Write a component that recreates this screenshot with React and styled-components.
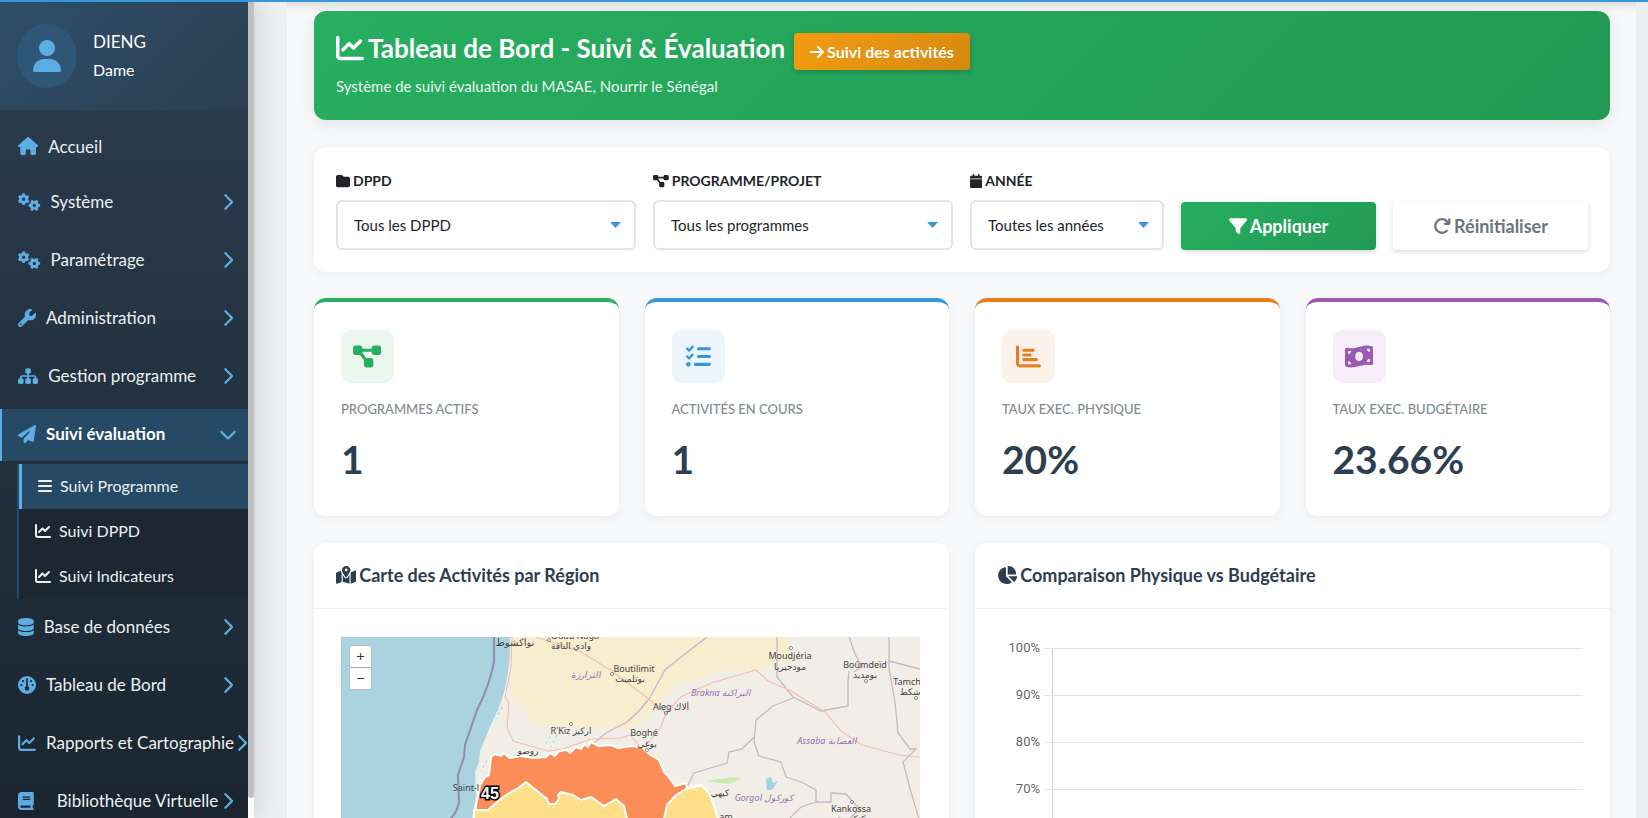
import styled, { createGlobalStyle } from "styled-components";
import {
    FaUser,
    FaHouse,
    FaGears,
    FaWrench,
    FaSitemap,
    FaPaperPlane,
    FaBars,
    FaChartLine,
    FaDatabase,
    FaGauge,
    FaBook,
    FaChevronRight,
    FaChevronDown,
    FaArrowRight,
    FaFolder,
    FaDiagramProject,
    FaCalendar,
    FaFilter,
    FaArrowRotateRight,
    FaListCheck,
    FaChartBar,
    FaMoneyBillWave,
    FaMapLocationDot,
    FaChartPie,
} from "react-icons/fa6";

const GlobalStyle = createGlobalStyle`
    * {
        box-sizing: border-box;
    }

    body {
        margin: 0;
        font-family: Lato, "Noto Sans", sans-serif;
        color: #212529;
        background: #ecf0f1;
    }

    #root {
        height: 100vh;
    }

    /* react-icons squeezes every icon in a square, give them back their width */
    svg {
        flex: none;
    }

    svg[viewBox="0 0 640 512"] {
        width: 1.25em;
    }

    svg[viewBox="0 0 576 512"] {
        width: 1.125em;
    }

    svg[viewBox="0 0 448 512"] {
        width: 0.875em;
    }

    svg[viewBox="0 0 320 512"] {
        width: 0.625em;
    }
`;

const Page = styled.div`
    display: flex;
    height: 100%;
    overflow: hidden;
    border-top: 2px solid #3498db;
`;

const Sidebar = styled.aside`
    flex: 0 0 254px;
    min-width: 0;
    display: flex;
    color: #ecf0f1;
    background: #fff;
    box-shadow: 4px 0 20px rgba(0, 0, 0, 0.12);
    z-index: 1;
`;

const SidebarBody = styled.div`
    flex: 1;
    min-width: 0;
    overflow: hidden;
    background: linear-gradient(180deg, #2c3e50 0%, #1a252f 100%);
`;

const Scrollbar = styled.div`
    width: 6px;
    height: calc(100% - 20px);
    border-radius: 0 0 3px 3px;
    background: #c1c1c1;
`;

const UserPanel = styled.div`
    display: flex;
    align-items: center;
    gap: 16px;
    height: 108px;
    padding: 0 17px;
    background: linear-gradient(135deg, #2d4f6b 0%, #2c3e50 100%);
`;

const Avatar = styled.div`
    display: flex;
    align-items: center;
    justify-content: center;
    width: 60px;
    height: 64px;
    border-radius: 50%;
    background: #2e5777;
    color: #5dade2;
    font-size: 32px;
`;

const UserName = styled.div`
    display: flex;
    flex-direction: column;
    gap: 4px;
    color: #fff;
    font-size: 17px;
    line-height: 24px;
`;

const FirstName = styled.span`
    font-size: 16px;
`;

const Menu = styled.ul`
    list-style: none;
    margin: 0;
    padding: 8px 0 0;
`;

const MenuEntry = styled.li`
    padding: 3px 0;
`;

const MenuLink = styled.a`
    display: flex;
    align-items: center;
    height: ${(p) => (p.$plain ? "50px" : "52px")};
    padding: ${(p) => (p.$plain ? "0 13px 0 16px" : "0 13px 3px 16px")};
    border-left: 2px solid ${(p) => (p.$active ? "#5dade2" : "transparent")};
    background: ${(p) => (p.$active ? "#264a66" : "transparent")};
    color: ${(p) => (p.$active ? "#fff" : "#ecf0f1")};
    font-size: 17px;
    font-weight: ${(p) => (p.$active ? 700 : 400)};
    white-space: nowrap;
    text-decoration: none;
`;

const MenuIcon = styled.span`
    display: flex;
    margin-right: ${(p) => (p.$wide ? "23px" : "10px")};
    color: #5dade2;
    font-size: 18px;
`;

const Chevron = styled.span`
    flex: none;
    display: flex;
    justify-content: center;
    width: 15px;
    margin-left: auto;
    color: #5dade2;
    font-size: 18px;
`;

const SubMenu = styled.ul`
    list-style: none;
    margin: 0 0 0 17px;
    padding: 0;
    border-left: 2px solid #264a66;
    background: #1c2731;
`;

const SubLink = styled.a`
    display: flex;
    align-items: center;
    gap: 8px;
    height: 45px;
    padding: 0 0 2px 16px;
    border-left: ${(p) => (p.$active ? "3px solid #5dade2" : "none")};
    background: ${(p) => (p.$active ? "#264a66" : "transparent")};
    color: #ecf0f1;
    font-size: 16px;
    text-decoration: none;
`;

const Main = styled.main`
    flex: 1;
    min-width: 0;
    margin: 0 12px 0 33px;
    padding: 9px 26px 0 27px;
    background: #f8f9fa;
    box-shadow: inset 0 12px 10px -8px rgba(0, 0, 0, 0.12);
`;

const Banner = styled.header`
    height: 109px;
    padding: 22px;
    border-radius: 12px;
    background: linear-gradient(135deg, #27ae60 0%, #229954 100%);
    box-shadow: 0 4px 15px rgba(0, 0, 0, 0.1);
    color: #fff;
`;

const BannerTitle = styled.div`
    display: flex;
    align-items: flex-start;
    gap: 9px;
`;

const Heading = styled.h1`
    display: flex;
    align-items: center;
    gap: 4px;
    margin: 0;
    font-size: 26px;
    font-weight: 700;
    line-height: 30px;
    white-space: nowrap;

    svg {
        font-size: 28px;
    }
`;

const ActivityLink = styled.a`
    display: flex;
    align-items: center;
    gap: 3px;
    height: 37px;
    padding: 0 16px;
    border-radius: 4px;
    background: linear-gradient(135deg, #f39c12, #d68910);
    box-shadow: 0 2px 5px rgba(0, 0, 0, 0.2);
    color: #fff;
    font-size: 16px;
    font-weight: 700;
    text-decoration: none;
    white-space: nowrap;
`;

const BannerText = styled.p`
    margin: 4px 0 0;
    font-size: 15px;
    line-height: 24px;
    opacity: 0.9;
`;

const Card = styled.section`
    border-radius: 12px;
    background: #fff;
    box-shadow: 0 2px 10px rgba(0, 0, 0, 0.06);
`;

const Filters = styled(Card)`
    display: grid;
    grid-template-columns: 300fr 300fr 194fr 195fr 195fr;
    gap: 17px;
    align-items: end;
    margin-top: 27px;
    padding: 22px;
    height: 125px;
`;

const Field = styled.div`
    display: flex;
    flex-direction: column;
    gap: 7px;
    min-width: 0;
`;

const Label = styled.label`
    display: flex;
    align-items: center;
    gap: 3px;
    font-size: 14px;
    font-weight: 700;
    line-height: 24px;
    text-transform: uppercase;
`;

const Select = styled.select`
    appearance: none;
    width: 100%;
    height: 50px;
    padding: 0 16px;
    border: 2px solid #dfe4e6;
    border-radius: 6px;
    background: #fff
        url("data:image/svg+xml,%3Csvg xmlns='http://www.w3.org/2000/svg' width='11' height='6'%3E%3Cpath d='M0 0h11L5.500 6z' fill='%233498db'/%3E%3C/svg%3E")
        no-repeat right 13px center;
    color: #212529;
    font-family: inherit;
    font-size: 15px;
`;

const Button = styled.button`
    display: flex;
    align-items: center;
    justify-content: center;
    gap: 3px;
    height: 48px;
    border: none;
    border-radius: 4px;
    background: ${(p) => (p.$primary ? "linear-gradient(135deg, #27ae60, #229954)" : "#fff")};
    box-shadow: 0 2px 5px rgba(0, 0, 0, 0.15);
    color: ${(p) => (p.$primary ? "#fff" : "#6c757d")};
    font-family: inherit;
    font-size: 18px;
    font-weight: 700;
`;

const Stats = styled.div`
    display: grid;
    grid-template-columns: repeat(4, 1fr);
    gap: 26px;
    margin-top: 26px;
`;

const StatCard = styled(Card)`
    height: 218px;
    padding: 28px 27px;
    border-top: 4px solid ${(p) => p.$color};
`;

const StatIcon = styled.div`
    display: flex;
    align-items: center;
    justify-content: center;
    width: 53px;
    height: 53px;
    border-radius: 10px;
    background: ${(p) => p.$tint};
    color: ${(p) => p.$color};
    font-size: 25px;
`;

const StatLabel = styled.div`
    margin-top: 16px;
    color: #7f8c8d;
    font-size: 13px;
    font-weight: 500;
    line-height: 20px;
    text-transform: uppercase;
`;

const StatValue = styled.div`
    margin-top: 16px;
    color: #2c3e50;
    font-size: 39px;
    font-weight: 700;
    line-height: 48px;
`;

const Panels = styled.div`
    display: grid;
    grid-template-columns: 1fr 1fr;
    gap: 26px;
    margin-top: 27px;
`;

const PanelHeader = styled.div`
    height: 66px;
    padding: 0 22px;
    border-bottom: 1px solid #ecf0f1;
`;

const PanelTitle = styled.h2`
    display: flex;
    align-items: center;
    gap: 3px;
    margin: 0;
    color: #2c3e50;
    font-size: 18px;
    font-weight: 700;
    line-height: 64px;
`;

const MapFrame = styled.div`
    position: relative;
    height: 420px;
    margin: 28px 29px 28px 27px;
    overflow: hidden;
    background: #f1eee8;
`;

const MapDrawing = styled.svg`
    display: block;
    width: 100%;
    height: 100%;
`;

const ZoomControl = styled.div`
    position: absolute;
    top: 8px;
    left: 8px;
    display: flex;
    flex-direction: column;
    border: 1px solid #b5bfc2;
    border-radius: 3px;
    overflow: hidden;
`;

const ZoomButton = styled.button`
    width: 21px;
    height: 21px;
    padding: 0;
    border: none;
    background: #fff;
    color: #333;
    font-family: "Open Sans", sans-serif;
    font-size: 15px;
    line-height: 21px;

    & + & {
        height: 22px;
        border-top: 1px solid #aaa;
    }
`;

const ChartBody = styled.div`
    padding: 28px 27px;
`;

const ChartRow = styled.div`
    display: grid;
    grid-template-columns: 38px 1fr;
    gap: 4px;
    height: 47px;
    color: #666;
    font-family: Roboto, sans-serif;
    font-size: 13px;
`;

const Tick = styled.span`
    text-align: right;
    line-height: 21px;
`;

const GridLine = styled.div`
    display: flex;
    margin-top: 11px;
    padding-left: 8px;
    border-top: 1px solid #e3e3e3;

    &::before {
        content: "";
        border-left: 1px solid #d0d0d0;
        margin-bottom: -11px;
    }
`;

const menuTop = [
    { label: "Accueil", icon: FaHouse, plain: true },
    { label: "Système", icon: FaGears },
    { label: "Paramétrage", icon: FaGears },
    { label: "Administration", icon: FaWrench },
    { label: "Gestion programme", icon: FaSitemap },
    { label: "Suivi évaluation", icon: FaPaperPlane, active: true },
];

const subMenu = [
    { label: "Suivi Programme", icon: FaBars, active: true },
    { label: "Suivi DPPD", icon: FaChartLine },
    { label: "Suivi Indicateurs", icon: FaChartLine },
];

const menuBottom = [
    { label: "Base de données", icon: FaDatabase },
    { label: "Tableau de Bord", icon: FaGauge },
    { label: "Rapports et Cartographie", icon: FaChartLine },
    { label: "Bibliothèque Virtuelle", icon: FaBook, wide: true },
];

const stats = [
    { label: "Programmes actifs", value: "1", icon: FaDiagramProject, color: "#27ae60", tint: "#e9f7ef" },
    { label: "Activités en cours", value: "1", icon: FaListCheck, color: "#3498db", tint: "#ebf5fb" },
    { label: "Taux exec. physique", value: "20%", icon: FaChartBar, color: "#e67e22", tint: "#fdf2e9" },
    { label: "Taux exec. budgétaire", value: "23.66%", icon: FaMoneyBillWave, color: "#9b59b6", tint: "#f5eef8" },
];

const ticks = ["100%", "90%", "80%", "70%", "60%", "50%"];

const places = [
    { x: 174, y: 9, text: "نواكشوط", size: 10 },
    { x: 234, y: 2, text: "Ouad Naga", size: 9 },
    { x: 230, y: 12, text: "وادي الناقة", size: 9 },
    { x: 293, y: 35, text: "Boutilimit", size: 9 },
    { x: 289, y: 45, text: "بوتلميت", size: 9 },
    { x: 230, y: 97, text: "R'Kiz اركيز", size: 9 },
    { x: 187, y: 117, text: "روصو", size: 9 },
    { x: 125, y: 154, text: "Saint-l", size: 9 },
    { x: 330, y: 73, text: "Aleg ألاك", size: 9 },
    { x: 303, y: 99, text: "Boghé", size: 9 },
    { x: 306, y: 110, text: "بوغي", size: 9 },
    { x: 449, y: 22, text: "Moudjéria", size: 9 },
    { x: 449, y: 33, text: "مودجيريا", size: 9 },
    { x: 524, y: 31, text: "Boûmdeïd", size: 9 },
    { x: 524, y: 41, text: "بومديد", size: 9 },
    { x: 566, y: 48, text: "Tamch", size: 9 },
    { x: 569, y: 58, text: "شكط", size: 9 },
    { x: 379, y: 159, text: "كيهي", size: 9 },
    { x: 385, y: 183, text: "am", size: 9 },
    { x: 510, y: 175, text: "Kankossa", size: 9 },
    { x: 510, y: 185, text: "كنكوصة", size: 9 },
];

const regions = [
    { x: 245, y: 41, text: "الترارزة" },
    { x: 380, y: 59, text: "Brakna البراكنة" },
    { x: 486, y: 107, text: "Assaba العصابة" },
    { x: 423, y: 164, text: "Gorgol كوركول" },
];

const towns = [
    [208, 3],
    [271, 37],
    [230, 87],
    [325, 76],
    [306, 113],
    [450, 11],
    [525, 44],
    [575, 61],
    [511, 165],
];

const MenuItem = ({ item }) => {
    const Icon = item.icon;
    return (
        <MenuEntry>
            <MenuLink href="#" $active={item.active} $plain={item.plain}>
                <MenuIcon $wide={item.wide}>
                    <Icon />
                </MenuIcon>
                {item.label}
                {!item.plain && <Chevron>{item.active ? <FaChevronDown /> : <FaChevronRight />}</Chevron>}
            </MenuLink>
        </MenuEntry>
    );
};

const RegionMap = () => (
    <MapFrame>
        <MapDrawing viewBox="0 0 579 420" preserveAspectRatio="xMinYMin slice" role="img" aria-label="Carte des régions">
            <rect width="579" height="420" fill="#f1eee8" />
            <path d="M170 0H449V23L416 35L390 33L335 48L316 70L304 84L290 92L240 90L194 88L184 72L172 62L168 40Z" fill="#f7edcf" />
            <path d="M0 0H169Q170 35 160 65L149 90L139 114L138 125L134 136L135 160L131 182L115 420H0Z" fill="#aad3df" />
            <path d="M153 0V25Q148 50 136 73L124 108L123 120L117 138L118 165Q116 176 109 182L85 420" fill="none" stroke="#8e8eb5" strokeWidth="2" />
            <g fill="none" stroke="#c8b7c4" strokeWidth="1.3">
                <path d="M366 0L335 24L324 33L308 62L298 74L286 85L265 96L252 107" />
                <path d="M436 0V40L452 60L480 74L507 69V45L508 34" />
                <path d="M452 61L432 69L415 83L413 105L418 119L440 125L445 140L460 145L475 153L475 165H490V156L505 157L513 166L519 172L509 181" />
                <path d="M413 100L401 112L388 115L386 126L353 136L346 150" />
                <path d="M508 0L514 17L521 29L513 35" />
                <path d="M548 0V32L554 65L557 96L569 112H575L562 125L570 155L578 182" />
                <path d="M548 24L579 32" />
                <path d="M475 165L460 170L445 185" />
            </g>
            <g fill="none" stroke="#f2bdb1" strokeWidth="1.1">
                <path d="M171 0L170 30L164 60L168 66L166 90L172 104L207 114L222 112L250 102L280 101L289 98L304 115" />
                <path d="M195 0L240 15L271 34L300 56L325 76L320 90L306 107" />
                <path d="M325 76L340 60L370 46L415 33L427 44L450 54L466 64L484 75L500 94L521 108L558 118L579 120" />
            </g>
            <g fill="none" stroke="#9fd3e2" strokeWidth="1" strokeDasharray="3 3">
                <path d="M157 72L151 84M161 70L155 82M209 99L203 110M216 98L210 110M146 123L140 134" />
            </g>
            <path d="M365 144L393 140L401 142L387 147Z" fill="#c9ecae" />
            <path d="M425 142L430 140L432 146L437 144L431 153L426 153Z" fill="#9fd3e2" />
            <path
                d="M132 420L134 174L139 148L144 140L148 138L150 120L154 117L160 119L163 116L169 121L180 119L192 121L205 120L209 116L214 119L218 114L226 113L229 116L235 110L240 112L243 107L247 110L250 105L258 109L270 108L277 111L290 109L301 110L308 117L318 123L323 135L327 139L334 149L345 146L346 151L335 162L377 182L400 420Z"
                fill="#fc8d59"
                stroke="#fff"
                strokeWidth="2"
                strokeLinejoin="round"
            />
            <path
                d="M130 420L133 173H147L162 160L170 155L176 152L185 145L206 162L208 167H214L218 162L217 158L220 155L232 158L240 163L250 160L263 169L275 162L283 169L286 182L290 420Z"
                fill="#fee08b"
                stroke="#fff"
                strokeWidth="2"
                strokeLinejoin="round"
            />
            <path
                d="M326 420L323 182L326 168L335 158L345 152L354 150L360 148L366 154L370 160L377 182L400 420Z"
                fill="#fee08b"
                stroke="#fff"
                strokeWidth="2"
                strokeLinejoin="round"
            />
            <g fill="none" stroke="#777" strokeWidth="0.8">
                {towns.map(([x, y]) => (
                    <circle key={`${x}-${y}`} cx={x} cy={y} r="1.6" />
                ))}
            </g>
            <g fontFamily="Noto Sans, DejaVu Sans, sans-serif" fill="#444" textAnchor="middle">
                {places.map((p) => (
                    <text key={p.text} x={p.x} y={p.y} fontSize={p.size}>
                        {p.text}
                    </text>
                ))}
            </g>
            <g fontFamily="Noto Sans, DejaVu Sans, sans-serif" fontSize="9" fontStyle="italic" fill="#9a6fb0" textAnchor="middle">
                {regions.map((r) => (
                    <text key={r.text} x={r.x} y={r.y}>
                        {r.text}
                    </text>
                ))}
            </g>
            <text x="149" y="162" textAnchor="middle" fontFamily="Liberation Sans, sans-serif" fontSize="16" fontWeight="700" fill="#fff" stroke="#000" strokeWidth="3" paintOrder="stroke">
                45
            </text>
        </MapDrawing>
        <ZoomControl>
            <ZoomButton aria-label="Zoom avant">+</ZoomButton>
            <ZoomButton aria-label="Zoom arrière">−</ZoomButton>
        </ZoomControl>
    </MapFrame>
);

const App = () => {
    return (
        <>
            <GlobalStyle />
            <Page>
                <Sidebar>
                    <SidebarBody>
                        <UserPanel>
                            <Avatar>
                                <FaUser />
                            </Avatar>
                            <UserName>
                                DIENG
                                <FirstName>Dame</FirstName>
                            </UserName>
                        </UserPanel>
                        <Menu>
                            {menuTop.map((item) => (
                                <MenuItem key={item.label} item={item} />
                            ))}
                            <li>
                                <SubMenu>
                                    {subMenu.map(({ label, icon: Icon, active }) => (
                                        <li key={label}>
                                            <SubLink href="#" $active={active}>
                                                <Icon />
                                                {label}
                                            </SubLink>
                                        </li>
                                    ))}
                                </SubMenu>
                            </li>
                            {menuBottom.map((item) => (
                                <MenuItem key={item.label} item={item} />
                            ))}
                        </Menu>
                    </SidebarBody>
                    <Scrollbar />
                </Sidebar>

                <Main>
                    <Banner>
                        <BannerTitle>
                            <Heading>
                                <FaChartLine />
                                Tableau de Bord - Suivi &amp; Évaluation
                            </Heading>
                            <ActivityLink href="#">
                                <FaArrowRight />
                                Suivi des activités
                            </ActivityLink>
                        </BannerTitle>
                        <BannerText>Système de suivi évaluation du MASAE, Nourrir le Sénégal</BannerText>
                    </Banner>

                    <Filters as="form">
                        <Field>
                            <Label htmlFor="dppd">
                                <FaFolder /> DPPD
                            </Label>
                            <Select id="dppd">
                                <option>Tous les DPPD</option>
                            </Select>
                        </Field>
                        <Field>
                            <Label htmlFor="programme">
                                <FaDiagramProject /> Programme/Projet
                            </Label>
                            <Select id="programme">
                                <option>Tous les programmes</option>
                            </Select>
                        </Field>
                        <Field>
                            <Label htmlFor="annee">
                                <FaCalendar /> Année
                            </Label>
                            <Select id="annee">
                                <option>Toutes les années</option>
                            </Select>
                        </Field>
                        <Button type="button" $primary>
                            <FaFilter /> Appliquer
                        </Button>
                        <Button type="reset">
                            <FaArrowRotateRight /> Réinitialiser
                        </Button>
                    </Filters>

                    <Stats>
                        {stats.map(({ label, value, icon: Icon, color, tint }) => (
                            <StatCard key={label} $color={color}>
                                <StatIcon $color={color} $tint={tint}>
                                    <Icon />
                                </StatIcon>
                                <StatLabel>{label}</StatLabel>
                                <StatValue>{value}</StatValue>
                            </StatCard>
                        ))}
                    </Stats>

                    <Panels>
                        <Card>
                            <PanelHeader>
                                <PanelTitle>
                                    <FaMapLocationDot /> Carte des Activités par Région
                                </PanelTitle>
                            </PanelHeader>
                            <RegionMap />
                        </Card>
                        <Card>
                            <PanelHeader>
                                <PanelTitle>
                                    <FaChartPie /> Comparaison Physique vs Budgétaire
                                </PanelTitle>
                            </PanelHeader>
                            <ChartBody>
                                {ticks.map((tick) => (
                                    <ChartRow key={tick}>
                                        <Tick>{tick}</Tick>
                                        <GridLine />
                                    </ChartRow>
                                ))}
                            </ChartBody>
                        </Card>
                    </Panels>
                </Main>
            </Page>
        </>
    );
};

export default App;
